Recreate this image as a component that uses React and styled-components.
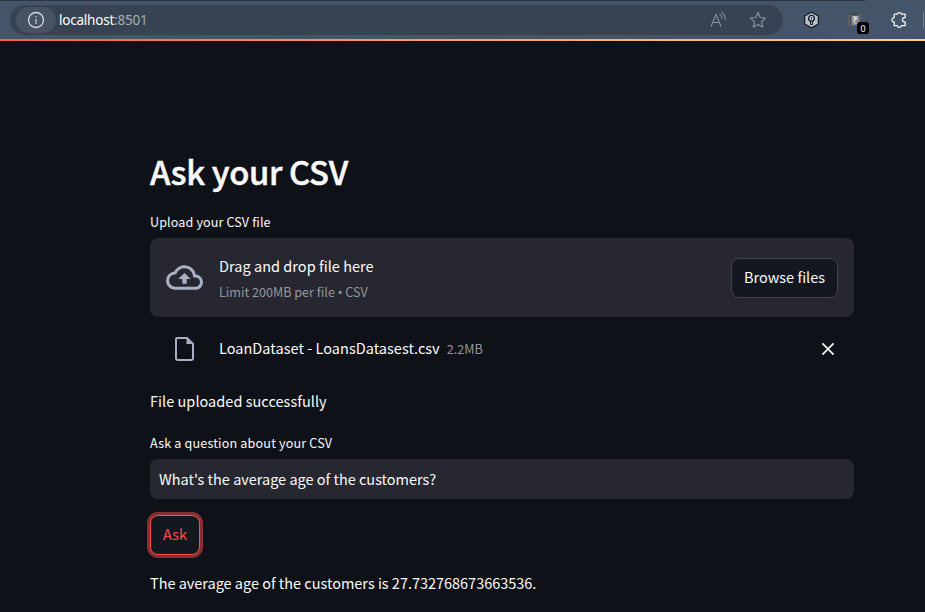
import React from "react";
import styled, { createGlobalStyle } from "styled-components";

const GlobalStyle = createGlobalStyle`
  * { box-sizing: border-box; }
  body { margin: 0; background: #0e1117; overflow: hidden; }
`;

const Page = styled.div`
  height: 612px;
  overflow: hidden;
  background: #0e1117;
  color: #fafafa;
  font-family: "Noto Sans CJK SC", "Noto Sans", sans-serif;
`;

const Toolbar = styled.header`
  display: flex;
  align-items: center;
  height: 39px;
  padding: 1px 0 0 10px;
  background: linear-gradient(#2b3544, #2b3544) 0 0 / 865px 1px no-repeat #445469;
`;

const AddressBar = styled.div`
  display: flex;
  align-items: center;
  width: 773px;
  height: 30px;
  padding: 0 16px 0 6px;
  border-radius: 15px;
  background: #374352;
`;

const InfoPill = styled.span`
  display: grid;
  place-items: center;
  width: 40px;
  height: 26px;
  margin-right: 3px;
  border-radius: 13px;
  background: #475362;
`;

const Url = styled.span`
  flex: 1;
  font: 13.5px/20px "Noto Sans", sans-serif;
  letter-spacing: -0.22px;
  color: #fff;
`;

const Port = styled.span`
  color: #a7acb2;
`;

const AddressIcons = styled.span`
  display: flex;
  align-items: center;
  gap: 22px;
`;

const Extensions = styled.div`
  display: flex;
  align-items: center;
  flex: 1;
  padding-left: 20px;
`;

const BadgeHolder = styled.span`
  position: relative;
  display: flex;
  margin: 0 28px 0 27px;
`;

const Badge = styled.span`
  position: absolute;
  left: 10px;
  top: 10px;
  width: 12px;
  height: 12px;
  border-radius: 3px;
  background: #000;
  color: #fff;
  font: 9px/13px "Noto Sans", sans-serif;
  text-align: center;
`;

const Divider = styled.span`
  width: 1px;
  height: 16px;
  margin-left: auto;
  margin-right: 1px;
  background: #78838f;
`;

const GradientLine = styled.div`
  height: 2px;
  background: linear-gradient(90deg, #ff5a50, #ff9068 38%, #ffb870 75%, #fdd47d);
`;

const Main = styled.main`
  width: 704px;
  margin: 108px 0 0 150px;
`;

const Title = styled.h1`
  margin: 0;
  height: 44px;
  font-size: 32.8px;
  line-height: 44px;
  font-weight: 500;
  -webkit-text-stroke: 0.5px #fafafa;
  letter-spacing: -0.33px;
  white-space: nowrap;
`;

const Text = styled.div`
  height: ${(p) => p.$height || 20}px;
  margin-top: ${(p) => p.$top || 0}px;
  font-size: ${(p) => (p.$small ? 12.6 : 14.5)}px;
  line-height: ${(p) => p.$height || 20}px;
  letter-spacing: ${(p) => p.$spacing || 0}px;
  color: ${(p) => (p.$muted ? "#96979c" : "#fafafa")};
  white-space: nowrap;
`;

const Bullet = styled.span`
  font-family: "Noto Sans", sans-serif;
`;

const Dropzone = styled.section`
  display: flex;
  align-items: center;
  height: 79px;
  margin-top: 6px;
  padding: 0 16px;
  border-radius: 8px;
  background: #262730;
`;

const DropCopy = styled.div`
  flex: 1;
  margin-left: 16px;
  padding-top: 3px;
`;

const Button = styled.button`
  display: block;
  width: ${(p) => p.$width}px;
  height: 40px;
  padding: 0 0 2px;
  border: 1px solid ${(p) => (p.$focused ? "#ff4b4b" : "#41434c")};
  border-radius: 8px;
  background: #131720;
  box-shadow: ${(p) => (p.$focused ? "0 0 0 3px rgba(255, 75, 75, 0.5)" : "none")};
  color: ${(p) => (p.$focused ? "#ff4b4b" : "#fafafa")};
  font: 14.5px/36px "Noto Sans CJK SC", "Noto Sans", sans-serif;
`;

const FileRow = styled.div`
  display: flex;
  align-items: center;
  height: 32px;
  margin-top: 16px;
  padding: 0 19px 0 24px;
`;

const FileName = styled.div`
  display: flex;
  flex: 1;
  gap: 7px;
  align-items: flex-end;
  margin-left: 24px;
  padding-bottom: 2px;
`;

const QuestionInput = styled.input`
  display: block;
  width: 704px;
  height: 40px;
  margin: 6px 0 16px;
  padding: 0 9px 1px;
  border: 0;
  border-radius: 8px;
  outline: 0;
  background: #262730;
  color: #fafafa;
  font: 14.5px "Noto Sans CJK SC", "Noto Sans", sans-serif;
  letter-spacing: -0.01px;
`;

const InfoIcon = () => (
  <svg width="18" height="18" viewBox="0 0 18 18" fill="none" stroke="#d5d9dd">
    <circle cx="9" cy="9" r="7.5" strokeWidth="1.3" />
    <path d="M9 8v5M9 5v1.5" stroke="#aeb4bb" strokeWidth="1.5" />
  </svg>
);

const ReadAloudIcon = () => (
  <svg width="17" height="18" viewBox="0 0 17 18" fill="none" stroke="#87909a" strokeWidth="1.1" strokeLinecap="round">
    <path d="M1 15.5 6 3.5l5 12M2.7 11.5h6.6M9.7 3.6q2 1 2.2 3.8M11.5 1.5q3.7 2 3.7 7" />
  </svg>
);

const StarIcon = () => (
  <svg width="18" height="18" viewBox="0 0 18 18" fill="none" stroke="#87909a" strokeWidth="1.2" strokeLinejoin="round">
    <path d="m9 1.5 2.2 5 5.3.6-4 3.7 1.2 5.3L9 13.4l-4.7 2.7 1.2-5.3-4-3.7 5.3-.6z" />
  </svg>
);

const HexagonIcon = () => (
  <svg width="17" height="18" viewBox="0 0 17 18">
    <path d="m8.5 1.2 6.8 3.8v8l-6.8 3.8L1.7 13V5z" fill="#b9c3cc" stroke="#111820" strokeWidth="1.2" />
    <circle cx="8.5" cy="7.3" r="2.9" fill="#b9c3cc" stroke="#111820" strokeWidth="1.3" />
    <path d="M8.5 6.5v1.6M7.4 10v3.4h2.2V10" fill="none" stroke="#111820" />
  </svg>
);

const ClipboardIcon = () => (
  <svg width="15" height="16" viewBox="0 0 15 16">
    <rect x="1" y="2" width="13" height="12.5" rx="1" fill="#5b5f63" />
    <path d="M4 1h7v2H4zM3 4h1v9H3z" fill="#3f444a" />
    <rect x="4.5" y="4" width="7.5" height="9" fill="#85888b" />
    <path d="M6 5h4.500M6 7h4.500M7.500 5q3 2-1 4l3 3" stroke="#eee" strokeWidth="1" fill="none" />
  </svg>
);

const PuzzleIcon = () => (
  <svg width="18" height="18" viewBox="0 0 18 18" fill="none" stroke="#f1f3f5" strokeWidth="1.3" strokeLinejoin="round">
    <path d="M5 3.2h2.4C7.5 1 11.3 1 11.4 3.2h3.8v3.5h-.9c-2.4 0-2.4 4.2 0 4.2h.9v3.8h-3.8c-.1 2.2-3.9 2.2-4 0H4.2V11C1.1 11 1.1 6.7 4.2 6.7V4q0-.8.8-.8z" />
  </svg>
);

const CloudIcon = () => (
  <svg width="37" height="37" viewBox="0 0 24 24" fill="#a9afc3">
    <path d="M19.35 10.04A7.49 7.49 0 0 0 12 4C9.11 4 6.6 5.64 5.35 8.04A5.994 5.994 0 0 0 0 14c0 3.31 2.69 6 6 6h13c2.76 0 5-2.24 5-5 0-2.64-2.05-4.78-4.65-4.96zM19 18H6c-2.21 0-4-1.79-4-4 0-2.05 1.53-3.76 3.56-3.97l1.07-.11.5-.95A5.469 5.469 0 0 1 12 6c2.62 0 4.88 1.86 5.39 4.43l.3 1.5 1.53.11A2.98 2.98 0 0 1 22 15c0 1.65-1.35 3-3 3zM8 13h2.55v3h2.9v-3H16l-4-4z" />
  </svg>
);

const FileIcon = () => (
  <svg width="21" height="26" viewBox="0 0 21 26">
    <path d="M3 2h10l6 6v14q0 2-2 2H4q-2 0-2-2V3q0-1 1-1z" fill="none" stroke="#a9afc3" strokeWidth="2" />
    <path d="M12.5 1.5V8H19z" fill="#a9afc3" />
  </svg>
);

const CloseIcon = () => (
  <svg width="14" height="14" viewBox="0 0 14 14" stroke="#fafafa" strokeWidth="1.7">
    <path d="m1.4 1.4 11.2 11.2M12.6 1.4 1.4 12.6" />
  </svg>
);

export default function App() {
  return (
    <Page>
      <GlobalStyle />
      <Toolbar>
        <AddressBar>
          <InfoPill><InfoIcon /></InfoPill>
          <Url>localhost<Port>:8501</Port></Url>
          <AddressIcons><ReadAloudIcon /><StarIcon /></AddressIcons>
        </AddressBar>
        <Extensions>
          <HexagonIcon />
          <BadgeHolder><ClipboardIcon /><Badge>0</Badge></BadgeHolder>
          <PuzzleIcon />
          <Divider />
        </Extensions>
      </Toolbar>
      <GradientLine />
      <Main>
        <Title>Ask your CSV</Title>
        <Text $small $top={19} $spacing={0.11}>Upload your CSV file</Text>
        <Dropzone>
          <CloudIcon />
          <DropCopy>
            <Text $height={26} $spacing={0.03}>Drag and drop file here</Text>
            <Text $small $muted $height={26}>Limit 200MB per file <Bullet>•</Bullet> CSV</Text>
          </DropCopy>
          <Button $width={107}>Browse files</Button>
        </Dropzone>
        <FileRow>
          <FileIcon />
          <FileName>
            <Text $height={24} $spacing={0.03}>LoanDataset - LoansDatasest.csv</Text>
            <Text $small $muted $height={22}>2.2MB</Text>
          </FileName>
          <CloseIcon />
        </FileRow>
        <Text $top={26} $spacing={0.03}>File uploaded successfully</Text>
        <Text $small $top={22} $spacing={0.16}>Ask a question about your CSV</Text>
        <QuestionInput readOnly value="What's the average age of the customers?" />
        <Button $width={50} $focused>Ask</Button>
        <Text $top={18} $spacing={-0.02}>The average age of the customers is 27.732768673663536.</Text>
      </Main>
    </Page>
  );
}
